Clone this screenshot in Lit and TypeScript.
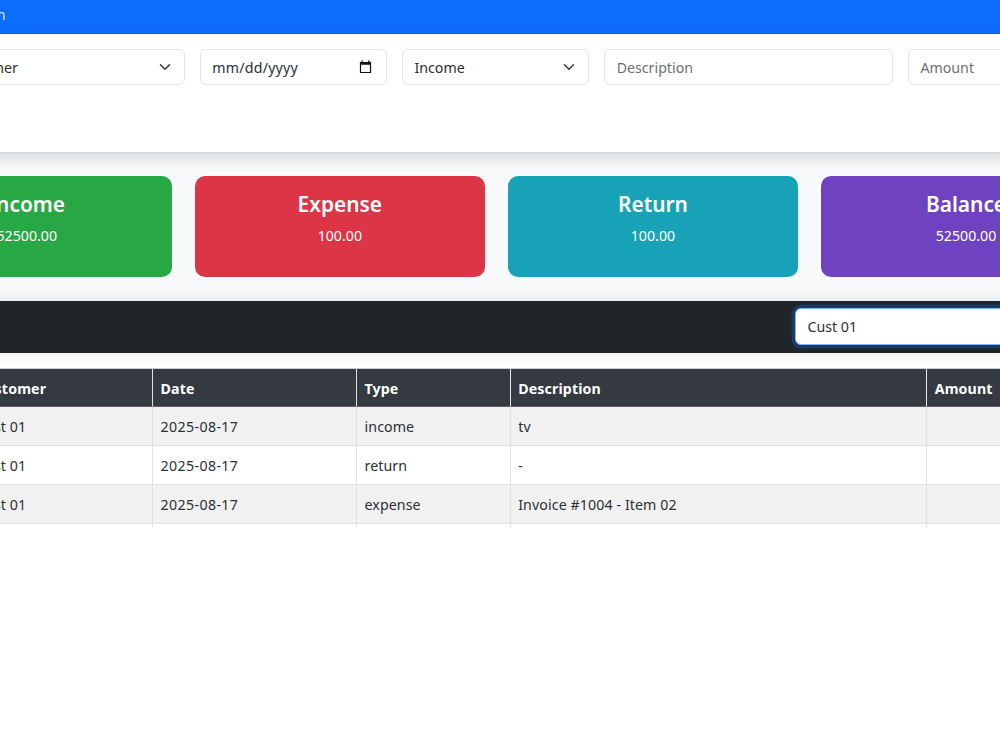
import { LitElement, html, css } from "lit";
import { customElement } from "lit/decorators.js";

const chevron = html`<svg class="chevron" viewBox="0 0 16 16"><path d="m2 5 6 6 6-6" fill="none" stroke="#343a40" stroke-width="2" stroke-linecap="round" stroke-linejoin="round"/></svg>`;
const calendar = html`<svg class="calendar" viewBox="0 0 13 14"><path d="M1.5 2.5h10v10h-10z" fill="none" stroke="#111" stroke-width="1.2"/><path d="M1 2h11v2.8H1zM2.5.5h1.4V3H2.5zM9.1.5h1.4V3H9.1z" fill="#111"/></svg>`;

const cards = [
  { title: "Income", value: "52500.00", tone: "green" },
  { title: "Expense", value: "100.00", tone: "red" },
  { title: "Return", value: "100.00", tone: "teal" },
  { title: "Balance", value: "52500.00", tone: "purple" },
];

const columns = ["id", "customer", "date", "type", "description", "amount"];
const headings = ["#", "Customer", "Date", "Type", "Description", "Amount"];
const rows = [
  ["1", "Cust 01", "2025-08-17", "income", "tv", ""],
  ["2", "Cust 01", "2025-08-17", "return", "-", ""],
  ["3", "Cust 01", "2025-08-17", "expense", "Invoice #1004 - Item 02", ""],
];

@customElement("app-root")
export class AppRoot extends LitElement {
  static styles = css`
    :host { display: block; width: 100%; height: 750px; overflow: hidden; background: #fff;
      font-family: "Noto Sans", "Open Sans", sans-serif; font-size: 14.2px; color: #2b3035; }
    * { box-sizing: border-box; }
    .page { width: 1300px; margin-left: -119px; }
    .nav { height: 34px; background: #0d6efd; border-bottom: 1px solid #0b61df; color: #e3eeff;
      line-height: 30px; }
    .brand { width: 124.5px; text-align: right; }
    .form { height: 119px; background: #fff; border-bottom: 1px solid #d5d6d7; padding: 15px 0 0 15px;
      display: flex; gap: 15.2px; position: relative; box-shadow: 0 5px 14px rgba(0,0,0,.13); }
    .field { height: 36px; flex: none; border: 1px solid #e2e5e8; border-radius: 6px; background: #fff;
      display: flex; align-items: center; justify-content: space-between; padding: 0 11.5px; }
    .wide { width: 288.6px; }
    .narrow { width: 187px; }
    .hint { color: #6c7075; }
    .sel { letter-spacing: .07px; }
    .day { letter-spacing: .22px; }
    .chevron { width: 12px; height: 12px; margin-right: 1px; }
    .calendar { width: 13px; height: 14px; margin-right: 2px; }
    .summary { height: 147.5px; background: #f8f9fa; padding: 22.5px 0 0 .6px; display: flex; gap: 22.8px; }
    .card { width: 290.3px; height: 101.3px; flex: none; border-radius: 10px; color: #fff; text-align: center;
      padding-top: 14.5px; }
    .green { background: #28a745; }
    .red { background: #dc3545; }
    .teal { background: #17a2b8; }
    .purple { background: #6f42c1; }
    .title { font-size: 20.9px; line-height: 28px; font-weight: 600; }
    .value { margin-top: 7px; line-height: 22px; }
    .bar { height: 52px; background: #212529; position: relative; box-shadow: 0 0 12px rgba(0,0,0,.1);
      padding: 7.5px 0 0 914px; }
    .picker { width: 300px; height: 36.5px; border-color: #86b7fe; box-shadow: 0 0 0 3.5px #1b3966; }
    .table { margin-top: 15.5px; margin-left: 21px; display: grid;
      grid-template-columns: 63px 188px 204px 153.7px 416.5px 220px; border-top: 1px solid #c8ccd0; }
    .cell { height: 39px; padding: 0 7.5px; line-height: 39px; border-right: 1px solid #dee2e6;
      border-bottom: 1px solid #dee2e6; white-space: nowrap; letter-spacing: .1px; }
    .customer { padding-left: 11px; }
    .date { letter-spacing: .38px; }
    .head { height: 38px; line-height: 39px; background: #343a40; color: #fff; font-weight: 700;
      border-bottom-color: #5b6066; letter-spacing: .13px; }
    .odd { background: #f1f1f1; }
    .stub { height: 2.5px; border-right: 1px solid #dee2e6; }
  `;

  render() {
    return html`
      <div class="page">
        <div class="nav"><div class="brand">Admin</div></div>
        <div class="form">
          <div class="field wide"><span class="sel">Select Customer</span>${chevron}</div>
          <div class="field narrow"><span class="day">mm/dd/yyyy</span>${calendar}</div>
          <div class="field narrow"><span>Income</span>${chevron}</div>
          <div class="field wide hint">Description</div>
          <div class="field wide hint">Amount</div>
        </div>
        <div class="summary">
          ${cards.map((c) => html`<div class="card ${c.tone}">
            <div class="title">${c.title}</div><div class="value">${c.value}</div>
          </div>`)}
        </div>
        <div class="bar"><div class="field picker">Cust 01</div></div>
        <div class="table">
          ${headings.map((h, i) => html`<div class="cell ${i === 1 ? "customer" : ""} head">${h}</div>`)}
          ${rows.map((r, i) => r.map((c, j) => html`<div class="cell ${columns[j]} ${i % 2 ? "" : "odd"}">${c}</div>`))}
          ${columns.map(() => html`<div class="stub"></div>`)}
        </div>
      </div>`;
  }
}
